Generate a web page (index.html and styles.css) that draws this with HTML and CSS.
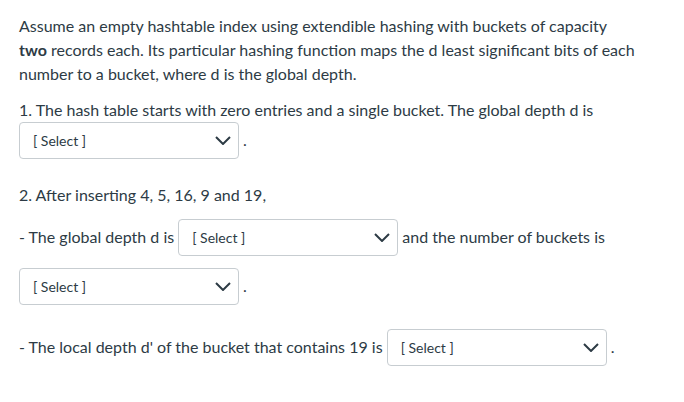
FILE: index.html
```html
<!DOCTYPE html>
<html>
<head>
<meta charset="utf-8">
<link rel="stylesheet" href="styles.css">
</head>
<body>
<div class="question">
  <p>Assume an empty hashtable index using extendible hashing with buckets of capacity <strong>two</strong> records each. Its particular hashing function maps the d least significant bits of each number to a bucket, where d is the global depth.</p>
  <p>1. The hash table starts with zero entries and a single bucket. The global depth d is <span class="select"><span class="select-text">[ Select ]</span><svg class="chev" width="16" height="9" viewBox="0 0 16 9"><path d="M1 1 L8 8 L15 1" fill="none" stroke="#2d3b45" stroke-width="2"/></svg></span> .</p>
  <p class="spacer">2. After inserting 4, 5, 16, 9 and 19,</p>
  <p>- The global depth d is <span class="select"><span class="select-text">[ Select ]</span><svg class="chev" width="16" height="9" viewBox="0 0 16 9"><path d="M1 1 L8 8 L15 1" fill="none" stroke="#2d3b45" stroke-width="2"/></svg></span> and the number of buckets is <span class="select"><span class="select-text">[ Select ]</span><svg class="chev" width="16" height="9" viewBox="0 0 16 9"><path d="M1 1 L8 8 L15 1" fill="none" stroke="#2d3b45" stroke-width="2"/></svg></span> .</p>
  <p>- The local depth d' of the bucket that contains 19 is <span class="select"><span class="select-text">[ Select ]</span><svg class="chev" width="16" height="9" viewBox="0 0 16 9"><path d="M1 1 L8 8 L15 1" fill="none" stroke="#2d3b45" stroke-width="2"/></svg></span> .</p>
</div>
</body>
</html>
```

FILE: styles.css
```css
html, body {
  margin: 0;
  padding: 0;
  background: #ffffff;
}

body {
  font-family: Lato, "Liberation Sans", sans-serif;
  font-size: 16px;
  line-height: 24px;
  color: #2d3b45;
}

.question {
  padding: 14px 19px 0 19px;
  width: 616px;
}

.question p {
  margin: 0 0 12px 0;
}

.question strong {
  font-weight: 700;
}

.select {
  display: inline-flex;
  align-items: center;
  justify-content: space-between;
  box-sizing: border-box;
  width: 220px;
  height: 37px;
  margin-bottom: 12px;
  padding: 0 7px 0 13px;
  border: 1px solid #c7cdd1;
  border-radius: 4px;
  background: #ffffff;
  font-size: 14px;
  line-height: 18px;
  vertical-align: baseline;
}

.select-text {
  color: #2d3b45;
}

.chev {
  display: block;
  flex: none;
}
```
